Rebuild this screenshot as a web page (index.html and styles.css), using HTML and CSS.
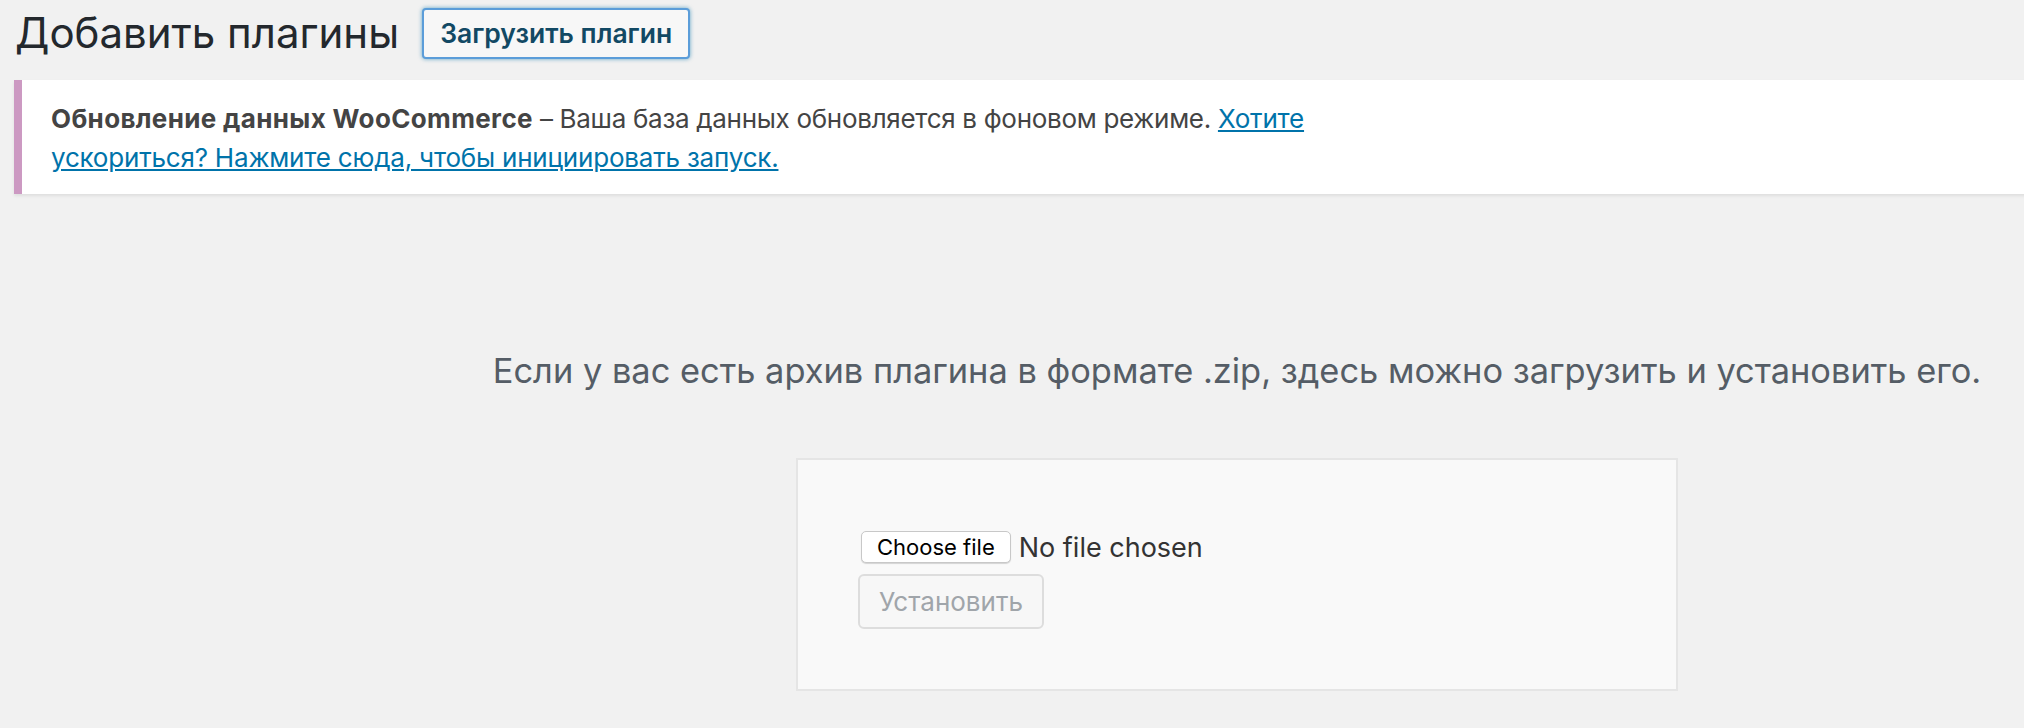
FILE: index.html
```html
<!DOCTYPE html>
<html lang="ru">
<head>
<meta charset="utf-8">
<title>Добавить плагины</title>
<link rel="stylesheet" href="styles.css">
</head>
<body>
<div class="wrap">
  <div class="title-row">
    <h1 class="page-title">Добавить плагины</h1>
    <a class="title-action" href="#">Загрузить плагин</a>
  </div>
  <div class="notice">
    <p class="notice-text"><strong class="notice-strong">Обновление данных WooCommerce</strong> – Ваша база данных обновляется в фоновом режиме. <a class="notice-link" href="#">Хотите ускориться? Нажмите сюда, чтобы инициировать запуск.</a></p>
  </div>
  <div class="upload">
    <p class="install-help">Если у вас есть архив плагина в формате .zip, здесь можно загрузить и установить его.</p>
    <form class="upload-form">
      <div class="file-row">
        <span class="file-btn">Choose file</span>
        <span class="file-name">No file chosen</span>
      </div>
      <button class="install-btn" type="button" disabled>Установить</button>
    </form>
  </div>
</div>
</body>
</html>
```

FILE: styles.css
```css
html, body {
  margin: 0;
  padding: 0;
  background: #f1f1f1;
  overflow: hidden;
}

body {
  font-family: Inter, "Noto Sans", sans-serif;
  color: #444;
}

.wrap {
  width: 2460px;
  padding-left: 14px;
  box-sizing: border-box;
}

.title-row {
  display: flex;
  align-items: center;
  gap: 23px;
  height: 60px;
  padding: 3px 0 0 1px;
  margin-bottom: 17px;
}

.page-title {
  margin: 0;
  font-size: 42px;
  font-weight: 400;
  line-height: 60px;
  color: #23282d;
}

.title-action {
  display: block;
  box-sizing: border-box;
  height: 51px;
  padding: 0 16px;
  border: 2px solid #5b9dd9;
  border-radius: 4px;
  background: #f7f7f7;
  color: #124964;
  font-size: 26.5px;
  font-weight: 600;
  line-height: 47px;
  text-decoration: none;
  box-shadow: 0 0 4px rgba(0, 115, 170, 0.6);
}

.notice {
  background: #fff;
  border-left: 8px solid #cc99c2;
  box-shadow: 0 2px 3px rgba(0, 0, 0, 0.08);
  padding: 19px 24px 17px 29px;
}

.notice-text {
  margin: 0;
  max-width: 1320px;
  font-size: 26px;
  line-height: 39px;
  letter-spacing: -0.3px;
  color: #444;
}

.notice-strong {
  font-weight: 700;
  letter-spacing: 0.35px;
}

.notice-link {
  color: #0073aa;
  text-decoration: underline;
  letter-spacing: -0.2px;
}

.upload {
  padding-top: 150px;
}

.install-help {
  margin: 0;
  text-align: center;
  font-size: 34.4px;
  line-height: 54px;
  color: #555d66;
}

.upload-form {
  width: 758px;
  margin: 60px auto 0;
  padding: 60px;
  border: 2px solid #e5e5e5;
  background: #f9f9f9;
}

.file-row {
  display: flex;
  align-items: center;
  gap: 8px;
  height: 54px;
  padding-left: 3px;
}

.file-btn {
  display: block;
  box-sizing: border-box;
  height: 32px;
  padding: 0 15px;
  border: 1px solid #c8c8c8;
  border-radius: 5px;
  background: #fff;
  box-shadow: 0 1px 1px rgba(0, 0, 0, 0.15);
  color: #000;
  font-size: 22px;
  line-height: 30px;
}

.file-name {
  font-size: 27px;
  color: #333;
}

.install-btn {
  display: block;
  box-sizing: border-box;
  height: 55px;
  padding: 0 19px;
  border: 2px solid #ddd;
  border-radius: 6px;
  background: #f7f7f7;
  color: #a0a5aa;
  font-family: inherit;
  font-size: 26px;
  line-height: 51px;
}
```
